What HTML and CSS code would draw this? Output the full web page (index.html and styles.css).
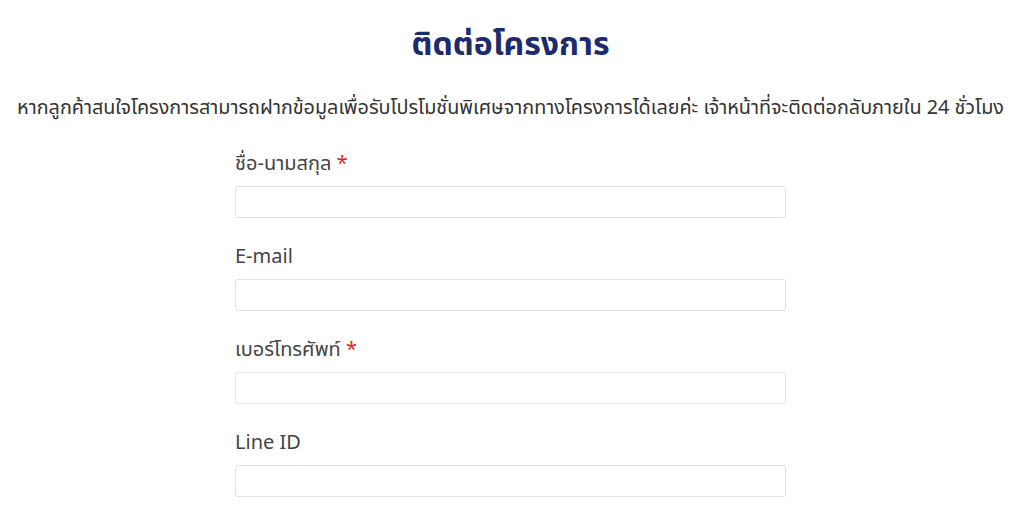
FILE: index.html
```html
<!DOCTYPE html>
<html lang="th">
<head>
<meta charset="utf-8">
<link rel="stylesheet" href="styles.css">
</head>
<body>
<main class="page">
  <h1 class="title">ติดต่อโครงการ</h1>
  <p class="lead">หากลูกค้าสนใจโครงการสามารถฝากข้อมูลเพื่อรับโปรโมชั่นพิเศษจากทางโครงการได้เลยค่ะ เจ้าหน้าที่จะติดต่อกลับภายใน 24 ชั่วโมง</p>
  <form class="form">
    <label class="field">
      <span class="label">ชื่อ-นามสกุล <span class="req">*</span></span>
      <input class="input" type="text">
    </label>
    <label class="field">
      <span class="label">E-mail</span>
      <input class="input" type="text">
    </label>
    <label class="field">
      <span class="label">เบอร์โทรศัพท์ <span class="req">*</span></span>
      <input class="input" type="text">
    </label>
    <label class="field">
      <span class="label">Line ID</span>
      <input class="input" type="text">
    </label>
  </form>
</main>
</body>
</html>
```

FILE: styles.css
```css
* { box-sizing: border-box; }
html, body { margin: 0; padding: 0; background: #fff; }
body {
  font-family: "Noto Sans", "Noto Sans Thai", "Open Sans", sans-serif;
  color: #333;
}
.page {
  display: flex;
  flex-direction: column;
  align-items: center;
  padding: 20px 3px 0 0;
}
.title {
  margin: 0;
  font-size: 32px;
  line-height: 46px;
  font-weight: 700;
  color: #1c2a6e;
}
.lead {
  margin: 26px 0 0;
  font-size: 19.8px;
  line-height: 30px;
  color: #333;
  text-align: center;
  white-space: nowrap;
}
.form {
  width: 551px;
  margin-top: 26px;
  display: flex;
  flex-direction: column;
  gap: 23px;
}
.field {
  display: flex;
  flex-direction: column;
  gap: 8px;
}
.label {
  font-size: 20px;
  line-height: 30px;
  color: #444;
}
.req { color: #e02424; }
.input {
  height: 32px;
  border: 1px solid #e2e2e2;
  border-radius: 3px;
  background: #fff;
  font: inherit;
  outline: none;
}
```
